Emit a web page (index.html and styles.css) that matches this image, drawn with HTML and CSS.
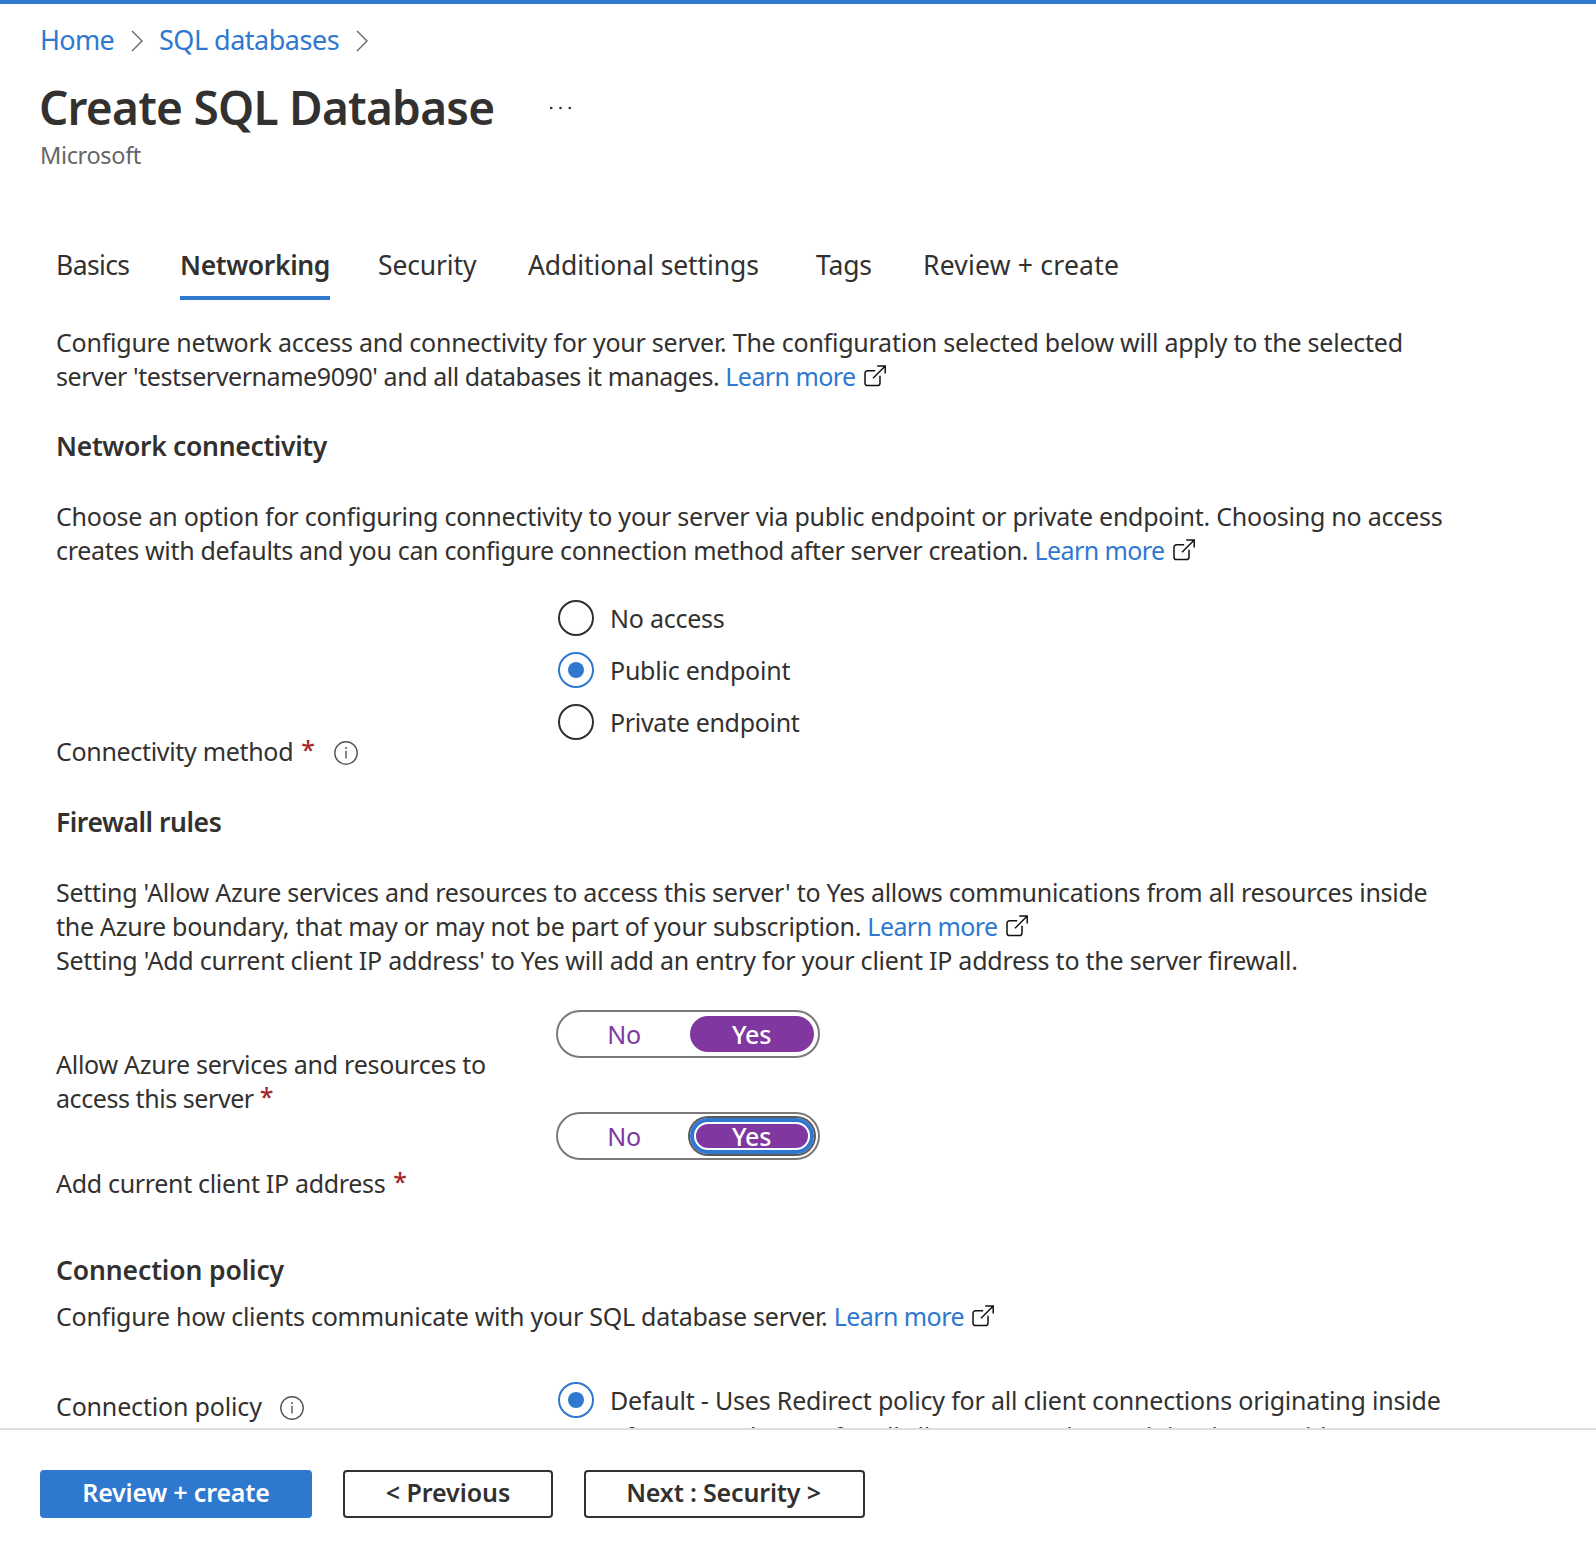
FILE: index.html
```html
<!DOCTYPE html>
<html lang="en">
<head>
<meta charset="utf-8">
<title>Create SQL Database</title>
<link rel="stylesheet" href="styles.css">
</head>
<body>
<svg class="defs" aria-hidden="true">
  <symbol id="external" viewBox="0 0 22 22">
    <path d="M11.2 5.800H3.600a2.600 2.600 0 0 0-2.600 2.600v9.600A2.600 2.600 0 0 0 3.600 20.600h9.800a2.600 2.600 0 0 0 2.600-2.600V10.800M9 13.300L21 1.300M13.200 1.100H21.200V8.600" fill="none" stroke="#111" stroke-width="1.500"/>
  </symbol>
  <symbol id="info" viewBox="0 0 24 24">
    <circle cx="12" cy="12" r="11.200" fill="none" stroke="#555" stroke-width="1.400"/>
    <path d="M12 9.800V17.600" stroke="#555" stroke-width="1.400"/>
    <circle cx="12" cy="7" r="1" fill="#555"/>
  </symbol>
  <symbol id="chevron" viewBox="0 0 12 22">
    <path d="M1 1L11 11L1 21" fill="none" stroke="#666" stroke-width="1.400"/>
  </symbol>
</svg>

<main class="blade">
  <nav class="crumbs">
    <a class="crumb-home">Home</a>
    <svg class="chevron"><use href="#chevron"/></svg>
    <a>SQL databases</a>
    <svg class="chevron"><use href="#chevron"/></svg>
  </nav>
  <header class="heading">
    <h1>Create SQL Database</h1>
    <svg class="more" viewBox="0 0 24 4"><circle cx="2.200" cy="2" r="1.300"/><circle cx="11.500" cy="2" r="1.300"/><circle cx="20.800" cy="2" r="1.300"/></svg>
  </header>
  <div class="publisher">Microsoft</div>

  <div class="tabs">
    <div class="tab basics">Basics</div>
    <div class="tab active">Networking</div>
    <div class="tab">Security</div>
    <div class="tab settings">Additional settings</div>
    <div class="tab">Tags</div>
    <div class="tab wide">Review + create</div>
  </div>

  <section class="content">
    <p class="intro">Configure network access and connectivity for your server. The configuration selected below will apply to the selected<br><span class="snug">server 'testservername9090' and all databases it manages. </span><a class="more-link">Learn more</a><svg class="ext"><use href="#external"/></svg></p>

    <h2>Network connectivity</h2>
    <p>Choose an option for configuring connectivity to your server via public endpoint or private endpoint. Choosing no access<br><span class="close">creates with defaults and you can configure connection method after server creation. </span><a class="more-link">Learn more</a><svg class="ext"><use href="#external"/></svg></p>

    <div class="field connectivity">
      <div class="label"><span class="close">Connectivity method</span><span class="req">*</span><svg class="info"><use href="#info"/></svg></div>
      <div class="radios">
        <div class="option"><span class="radio"></span>No access</div>
        <div class="option"><span class="radio checked"></span>Public endpoint</div>
        <div class="option"><span class="radio"></span><span class="close">Private endpoint</span></div>
      </div>
    </div>

    <h2 class="firewall">Firewall rules</h2>
    <p><span class="near">Setting 'Allow Azure services and resources to access this server' to Yes allows communications from all resources inside</span><br><span class="near">the Azure boundary, that may or may not be part of your subscription. </span><a class="more-link">Learn more</a><svg class="ext"><use href="#external"/></svg><br>Setting 'Add current client IP address' to Yes will add an entry for your client IP address to the server firewall.</p>

    <div class="field allow">
      <div class="label"><span class="near">Allow Azure services and resources to</span><br><span class="snug">access this server</span><span class="req tight">*</span></div>
      <div class="toggle"><span class="off">No</span><span class="on">Yes</span></div>
    </div>
    <div class="field client">
      <div class="label"><span class="close">Add current client IP address</span><span class="req">*</span></div>
      <div class="toggle"><span class="off">No</span><span class="on focused">Yes</span></div>
    </div>

    <h2 class="policy-title">Connection policy</h2>
    <p class="policy-text"><span class="near">Configure how clients communicate with your SQL database server. </span><a class="more-link">Learn more</a><svg class="ext"><use href="#external"/></svg></p>
    <div class="field policy">
      <div class="label">Connection policy<svg class="info"><use href="#info"/></svg></div>
      <div class="option"><span class="radio checked"></span><span class="option-text">Default - Uses Redirect policy for all client connections originating inside<span class="second">of Azure and Proxy for all client connections originating outside Azure</span></span></div>
    </div>
  </section>
</main>

<footer class="actions">
  <button class="btn primary">Review + create</button>
  <button class="btn previous">&lt; Previous</button>
  <button class="btn next">Next : Security &gt;</button>
</footer>
</body>
</html>
```
FILE: styles.css
```css
* { box-sizing: border-box; }
body {
  margin: 0;
  height: 1556px;
  display: flex;
  flex-direction: column;
  overflow: hidden;
  background: #fff;
  color: #323130;
  font: 400 25px/34px "Noto Sans", "Open Sans", sans-serif;
  letter-spacing: -0.235px;
}
h1, h2, p { margin: 0; }
a { color: #2e78d0; }
.defs { position: absolute; width: 0; height: 0; }

.blade {
  height: 1428px;
  flex: none;
  overflow: hidden;
  border-top: 4px solid #2e78d0;
  white-space: nowrap;
}
.crumbs {
  display: flex;
  align-items: center;
  height: 36px;
  margin: 18px 0 0 40px;
  font-size: 27px;
  line-height: 36px;
  letter-spacing: -0.5px;
}
.crumb-home { letter-spacing: -0.7px; }
.chevron { width: 12px; height: 22px; margin: 2px 16px 0 17px; }
.heading { display: flex; align-items: center; height: 60px; margin: 19px 0 0 39px; }
h1 { font-size: 46px; font-weight: 600; line-height: 60px; letter-spacing: -0.76px; }
.more { width: 24px; height: 4px; margin: 2px 0 0 55px; fill: #323130; }
.publisher {
  margin: 2px 0 0 40px;
  font-size: 23.5px;
  line-height: 32px;
  letter-spacing: -0.35px;
  color: #666;
}
.tabs {
  display: grid;
  grid-template-columns: 124px 198px 150px 288px 107px auto;
  justify-items: start;
  margin: 76px 0 0 56px;
  font-size: 26.5px;
  line-height: 36px;
}
.tab { padding-bottom: 13px; letter-spacing: -0.15px; }
.basics { letter-spacing: -0.6px; }
.settings { letter-spacing: -0.1px; }
.wide { letter-spacing: 0.22px; }
.active { font-weight: 600; letter-spacing: -0.36px; border-bottom: 4px solid #2e78d0; }

.content { margin: 25px 0 0 56px; }
h2 {
  margin: 35px 0 35px;
  font-size: 26.5px;
  font-weight: 600;
  line-height: 36px;
  letter-spacing: -0.32px;
}
.near { letter-spacing: -0.265px; }
.close { letter-spacing: -0.32px; }
.snug { letter-spacing: -0.43px; }
.more-link { letter-spacing: -0.57px; }
.ext { width: 22px; height: 22px; margin-left: 8px; vertical-align: -1px; }

.field { display: grid; grid-template-columns: 500px auto; justify-items: start; align-items: start; }
.req { margin-left: 8px; font-weight: 500; line-height: 20px; vertical-align: 2px; color: #a4262c; }
.tight { margin-left: 6px; }
.info { width: 24px; height: 24px; margin-left: 19px; vertical-align: -4px; }
.connectivity { height: 168px; margin-top: 33px; }
.connectivity .label { align-self: end; }
.radios { display: grid; gap: 16px; margin-left: 2px; }
.option { display: flex; gap: 16px; line-height: 36px; }
.radio {
  display: grid;
  place-items: center;
  flex: none;
  width: 36px;
  height: 36px;
  border: 2px solid #323130;
  border-radius: 50%;
}
.checked { border-color: #2e78d0; }
.checked::after { content: ""; width: 16px; height: 16px; border-radius: 50%; background: #2e78d0; }
.firewall { margin-top: 36px; letter-spacing: -0.45px; }

.allow { height: 102px; margin-top: 33px; }
.allow .label { margin-top: 37px; }
.client { height: 88px; }
.client .label { margin-top: 54px; }
.toggle {
  display: flex;
  align-items: center;
  justify-content: space-between;
  width: 264px;
  height: 48px;
  padding: 0 4px;
  border: 2px solid #7a7a7a;
  border-radius: 24px;
  line-height: 36px;
  text-align: center;
  color: #8037a0;
}
.off { width: 124px; }
.on { width: 124px; height: 36px; padding-right: 1px; border-radius: 18px; background: #8037a0; color: #fff; font-weight: 500; }
.focused { box-shadow: inset 0 0 0 4px #2e78d0, inset 0 0 0 6px #fff, 0 0 0 2px #5c5a58; }

.policy-title { margin: 52px 0 11px; letter-spacing: -0.12px; }
.policy { margin-top: 49px; }
.policy .label { margin-top: 7px; letter-spacing: -0.17px; }
.policy .info { margin-left: 18px; }
.policy .option { margin-left: 2px; letter-spacing: -0.2px; }
.option-text { margin-top: 1px; line-height: 34px; }
.second { display: block; margin-top: 2px; }

.actions {
  display: flex;
  align-items: flex-start;
  flex: 1;
  padding: 40px 0 0 40px;
  border-top: 2px solid #dedede;
}
.btn {
  height: 48px;
  padding: 0 0 4px;
  border: 2px solid #323130;
  border-radius: 4px;
  background: #fff;
  color: #323130;
  font: inherit;
  font-weight: 600;
  letter-spacing: -0.17px;
}
.primary { width: 272px; border-color: #2e78d0; background: #2e78d0; color: #fff; }
.previous { width: 210px; margin-left: 31px; letter-spacing: -0.05px; }
.next { width: 281px; margin-left: 31px; padding-right: 2px; }
```
